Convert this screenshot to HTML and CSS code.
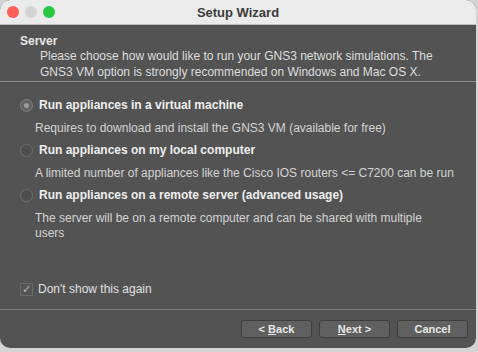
FILE: index.html
```html
<!DOCTYPE html>
<html lang="en">
<head>
  <meta charset="UTF-8" />
  <title>Setup Wizard</title>
  <link rel="stylesheet" href="styles.css">
</head>
<body>
  <div class="window">
    <div class="titlebar">
      <div class="lights">
        <span class="light red"></span>
        <span class="light gray"></span>
        <span class="light green"></span>
      </div>
      <div class="title">Setup Wizard</div>
    </div>

    <div class="header">
      <div class="header-title">Server</div>
      <div class="header-sub">Please choose how would like to run your GNS3 network simulations. The GNS3 VM option is strongly recommended on Windows and Mac OS X.</div>
    </div>

    <div class="content">
      <div class="option">
        <label class="radio-row"><span class="radio checked"></span>Run appliances in a virtual machine</label>
        <div class="desc">Requires to download and install the GNS3 VM (available for free)</div>
      </div>
      <div class="option">
        <label class="radio-row"><span class="radio"></span>Run appliances on my local computer</label>
        <div class="desc">A limited number of appliances like the Cisco IOS routers &lt;= C7200 can be run</div>
      </div>
      <div class="option">
        <label class="radio-row"><span class="radio"></span>Run appliances on a remote server (advanced usage)</label>
        <div class="desc">The server will be on a remote computer and can be shared with multiple<br />users</div>
      </div>

      <label class="check-row"><span class="check">&#10003;</span>Don't show this again</label>
    </div>

    <div class="footer">
      <button class="button">&lt; <u>B</u>ack</button>
      <button class="button"><u>N</u>ext &gt;</button>
      <button class="button">Cancel</button>
    </div>
  </div>
</body>
</html>
```

FILE: styles.css
```css
body {
  margin: 0;
  padding: 0;
  background-color: #d4d4d4;
  font-family: 'Liberation Sans', Arial, sans-serif;
  font-size: 12px;
  color: #dcdcdc;
}
.window {
  width: 476px;
  height: 348px;
  background-color: #535353;
  border-radius: 10px;
  overflow: hidden;
  display: flex;
  flex-direction: column;
}
.titlebar {
  height: 24px;
  background-color: #ebebeb;
  border-bottom: 1px solid #bdbdbd;
  display: flex;
  align-items: center;
  position: relative;
  flex-shrink: 0;
}
.lights {
  display: flex;
  gap: 6px;
  padding-left: 7px;
}
.light {
  width: 12px;
  height: 12px;
  border-radius: 50%;
  display: block;
}
.red { background-color: #fe5f57; }
.gray { background-color: #d3d3d3; }
.green { background-color: #28c840; }
.title {
  position: absolute;
  left: 0;
  right: 0;
  text-align: center;
  font-weight: bold;
  font-size: 13px;
  color: #3b3b3b;
}
.header {
  padding: 9px 16px 1px 20px;
  border-bottom: 1px solid #8c8c8c;
  flex-shrink: 0;
}
.header-title {
  font-weight: bold;
  color: #e6e6e6;
  line-height: 14px;
}
.header-sub {
  padding-left: 20px;
  line-height: 16px;
  color: #dedede;
}
.content {
  flex: 1;
  padding: 15px 14px 0 20px;
  border-bottom: 1px solid #7a7a7a;
}
.option {
  margin-bottom: 6px;
}
.radio-row {
  display: flex;
  align-items: center;
  font-weight: bold;
  color: #eeeeee;
  line-height: 16px;
}
.radio {
  width: 11px;
  height: 11px;
  border-radius: 50%;
  border: 1px solid #6e6e6e;
  background-color: #4e4e4e;
  margin-right: 6px;
  position: relative;
}
.radio.checked {
  border-color: #808080;
  background-color: #626262;
}
.radio.checked::after {
  content: "";
  position: absolute;
  left: 3px;
  top: 3px;
  width: 5px;
  height: 5px;
  border-radius: 50%;
  background-color: #9c9c9c;
}
.desc {
  padding: 8px 0 0 15px;
  line-height: 15px;
  color: #d4d4d4;
  white-space: nowrap;
}
.check-row {
  display: flex;
  align-items: center;
  margin-top: 40px;
  line-height: 16px;
  color: #e0e0e0;
}
.check {
  width: 11px;
  height: 11px;
  border: 1px solid #6a6a6a;
  background-color: #555555;
  color: #b8b8b8;
  font-size: 11px;
  line-height: 11px;
  text-align: center;
  margin-right: 5px;
}
.footer {
  height: 38px;
  display: flex;
  justify-content: flex-end;
  align-items: center;
  gap: 7px;
  padding-right: 8px;
  flex-shrink: 0;
}
.button {
  width: 71px;
  height: 18px;
  background-color: #606060;
  border: 1px solid #3e3e3e;
  border-radius: 3px;
  color: #e8e8e8;
  font-family: 'Liberation Sans', Arial, sans-serif;
  font-size: 11px;
  font-weight: bold;
  padding: 0;
}
```
